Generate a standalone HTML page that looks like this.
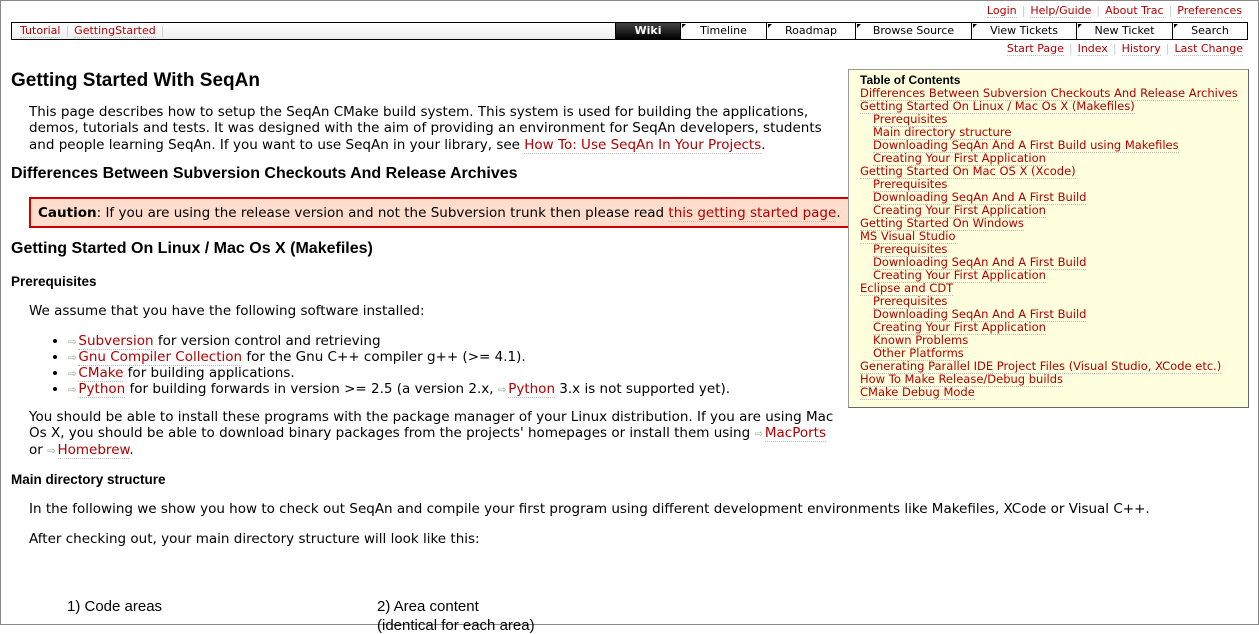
<!DOCTYPE html>
<html><head><meta charset="utf-8"><style>
html,body{margin:0;padding:0;background:#fff}
body{width:1259px;height:625px;overflow:hidden;position:relative;font-family:"DejaVu Sans",Verdana,sans-serif;font-size:13.5px;color:#000}
.frame{position:absolute;left:0;top:0;width:1257px;height:623px;border:1px solid #888;}
a{color:#b00000;text-decoration:none;border-bottom:1px dotted #bbb}
.meta{position:absolute;right:17px;top:4px;font-size:11px}
.sep{color:#ccc;margin:0 5px}
.nav{position:absolute;left:11px;top:22px;width:1235px;height:16px;border:1px solid #000;background:linear-gradient(#fff,#eee)}
.bc{position:absolute;left:8px;top:1px;font-size:11px}
.tabs{position:absolute;right:0;top:0;height:16px;display:flex;font-size:11px}
.tabs div{border-left:1px solid #000;text-align:center;line-height:16px;position:relative;background:#fff;box-sizing:border-box}
.tabs div:before{content:"";position:absolute;left:1px;top:1px;border-top:4px solid #000;border-right:4px solid transparent}
.tabs .w{color:#fff;font-weight:bold;background:linear-gradient(#444,#000)}
.tabs .w:before{display:none}
.ctx{position:absolute;right:16px;top:42px;font-size:11px}
h1,h2,h3{font-family:"Liberation Sans",Arial,sans-serif;font-weight:bold;margin:0;position:absolute;left:11px}
h1{font-size:19px;top:70px}
h2{font-size:16px}
h3{font-size:13.5px}
p{margin:0;position:absolute;left:29px;line-height:16.3px}
.toc{position:absolute;left:848px;top:69px;width:388px;height:333px;background:#ffd;border:1px solid #999;border-right-color:#666;border-bottom-color:#666;padding:4px 0 0 11px;font-size:11.5px;line-height:13px}
.toc b{font-family:"Liberation Sans",Arial,sans-serif;font-size:12px}
.toc div.i{padding-left:13px}
.caution{position:absolute;left:29px;top:197px;width:830px;height:31px;background:#fdc;border:2px solid #c00;border-right:none;box-sizing:border-box;padding:6px 0 0 7px;color:#000;white-space:nowrap}
ul{position:absolute;left:50px;top:333px;margin:0;padding:0 0 0 18px;line-height:16px;white-space:nowrap}
li{height:16px}
.ext{color:#8a8;font-size:10px;margin-right:2px;line-height:0;vertical-align:baseline}
.img{position:absolute;font-family:"Liberation Sans",sans-serif;font-size:15px}
</style></head><body>
<div class="frame"></div>
<div class="meta"><a>Login</a><span class="sep">|</span><a>Help/Guide</a><span class="sep">|</span><a>About Trac</a><span class="sep">|</span><a>Preferences</a></div>
<div class="nav">
 <div class="bc"><a>Tutorial</a><span class="sep">|</span><a>GettingStarted</a><span class="sep">|</span></div>
 <div class="tabs">
  <div class="w" style="width:65px">Wiki</div>
  <div style="width:86px">Timeline</div>
  <div style="width:89px">Roadmap</div>
  <div style="width:116px">Browse Source</div>
  <div style="width:105px">View Tickets</div>
  <div style="width:96px">New Ticket</div>
  <div style="width:75px">Search</div>
 </div>
</div>
<div class="ctx"><a>Start Page</a><span class="sep">|</span><a>Index</a><span class="sep">|</span><a>History</a><span class="sep">|</span><a>Last Change</a></div>

<h1>Getting Started With SeqAn</h1>
<p style="top:104px;width:805px">This page describes how to setup the SeqAn CMake build system. This system is used for building the applications, demos, tutorials and tests. It was designed with the aim of providing an environment for SeqAn developers, students and people learning SeqAn. If you want to use SeqAn in your library, see <a>How To: Use SeqAn In Your Projects</a>.</p>
<h2 style="top:165px">Differences Between Subversion Checkouts And Release Archives</h2>
<div class="caution"><b>Caution</b>: If you are using the release version and not the Subversion trunk then please read <a>this getting started page</a>.</div>
<h2 style="top:240px">Getting Started On Linux / Mac Os X (Makefiles)</h2>
<h3 style="top:274px">Prerequisites</h3>
<p style="top:303px">We assume that you have the following software installed:</p>
<ul>
<li><span class="ext">⇨</span><a>Subversion</a> for version control and retrieving</li>
<li><span class="ext">⇨</span><a>Gnu Compiler Collection</a> for the Gnu C++ compiler g++ (&gt;= 4.1).</li>
<li><span class="ext">⇨</span><a>CMake</a> for building applications.</li>
<li><span class="ext">⇨</span><a>Python</a> for building forwards in version &gt;= 2.5 (a version 2.x, <span class="ext">⇨</span><a>Python</a> 3.x is not supported yet).</li>
</ul>
<p style="top:409px;width:812px">You should be able to install these programs with the package manager of your Linux distribution. If you are using Mac Os X, you should be able to download binary packages from the projects' homepages or install them using <span class="ext">⇨</span><a>MacPorts</a> or <span class="ext">⇨</span><a>Homebrew</a>.</p>
<h3 style="top:472px">Main directory structure</h3>
<p style="top:501px;white-space:nowrap">In the following we show you how to check out SeqAn and compile your first program using different development environments like Makefiles, XCode or Visual C++.</p>
<p style="top:531px">After checking out, your main directory structure will look like this:</p>
<div class="img" style="left:67px;top:598px">1) Code areas</div>
<div class="img" style="left:377px;top:598px">2) Area content</div>
<div class="img" style="left:377px;top:617px">(identical for each area)</div>

<div class="toc">
<b>Table of Contents</b>
<div><a>Differences Between Subversion Checkouts And Release Archives</a></div>
<div><a>Getting Started On Linux / Mac Os X (Makefiles)</a></div>
<div class="i"><a>Prerequisites</a></div>
<div class="i"><a>Main directory structure</a></div>
<div class="i"><a>Downloading SeqAn And A First Build using Makefiles</a></div>
<div class="i"><a>Creating Your First Application</a></div>
<div><a>Getting Started On Mac OS X (Xcode)</a></div>
<div class="i"><a>Prerequisites</a></div>
<div class="i"><a>Downloading SeqAn And A First Build</a></div>
<div class="i"><a>Creating Your First Application</a></div>
<div><a>Getting Started On Windows</a></div>
<div><a>MS Visual Studio</a></div>
<div class="i"><a>Prerequisites</a></div>
<div class="i"><a>Downloading SeqAn And A First Build</a></div>
<div class="i"><a>Creating Your First Application</a></div>
<div><a>Eclipse and CDT</a></div>
<div class="i"><a>Prerequisites</a></div>
<div class="i"><a>Downloading SeqAn And A First Build</a></div>
<div class="i"><a>Creating Your First Application</a></div>
<div class="i"><a>Known Problems</a></div>
<div class="i"><a>Other Platforms</a></div>
<div><a>Generating Parallel IDE Project Files (Visual Studio, XCode etc.)</a></div>
<div><a>How To Make Release/Debug builds</a></div>
<div><a>CMake Debug Mode</a></div>
</div>
</body></html>
